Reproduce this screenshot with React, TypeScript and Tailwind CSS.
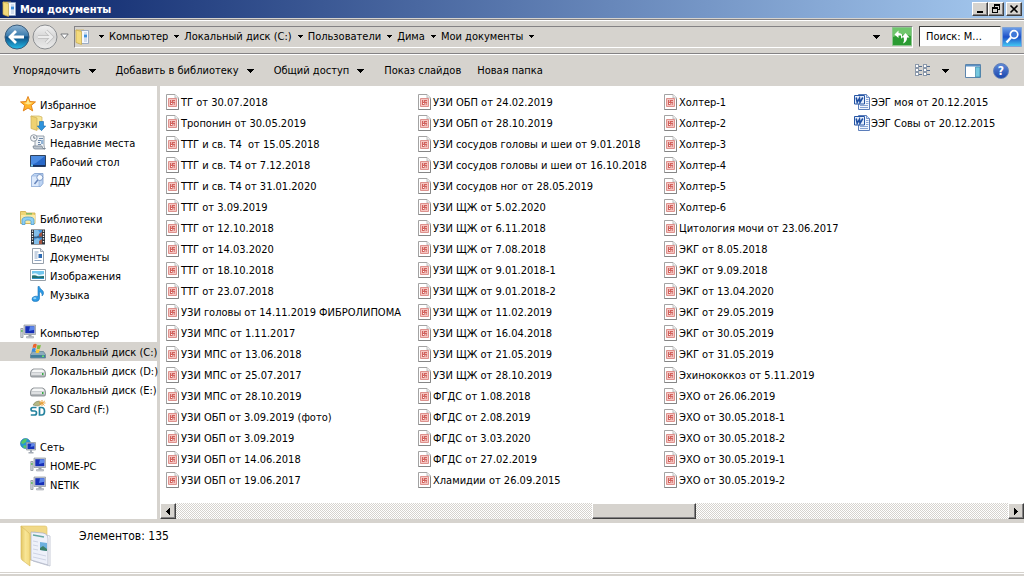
import type { ReactNode } from "react";

interface ITreeItem {
  label: string;
  icon: ReactNode;
  active?: boolean;
}

interface ITreeGroup extends ITreeItem {
  items: ITreeItem[];
}

function Arrow() {
  return (
    <svg viewBox="0 0 7 4" className="h-1 w-[7px] shrink-0" shapeRendering="crispEdges">
      <path d="M0 0h7L3.5 4z" fill="#000" />
    </svg>
  );
}

function CrumbArrow() {
  return (
    <svg viewBox="0 0 5 3" className="h-[3px] w-[5px] shrink-0" shapeRendering="crispEdges">
      <path d="M0 0h5L2.5 3z" fill="#000" />
    </svg>
  );
}

function FolderIcon({ className }: { className: string }) {
  return (
    <svg viewBox="0 0 32 42" className={className}>
      <defs>
        <linearGradient id="folder" x1="0" y1="0" x2="1" y2="0">
          <stop offset="0" stopColor="#e3c765" />
          <stop offset="0.5" stopColor="#f8e596" />
          <stop offset="1" stopColor="#f3d97c" />
        </linearGradient>
      </defs>
      <path d="M1 1h24q2 0 2 2v32H8z" fill="#f1d987" stroke="#dcc069" strokeWidth="0.6" />
      <path d="M14 7l16 4v30l-17-5z" fill="#fdfdff" stroke="#b9bfce" strokeWidth="0.8" />
      <path d="M11 7l12 1q5 1 5 6v26l-17-5z" fill="#eef1fa" stroke="#a9afc0" strokeWidth="0.7" />
      <path d="M13 10l11 2" stroke="#64a7a1" strokeWidth="1.6" />
      <path d="M20 17l7 1v8l-7-1z" fill="#6db0de" />
      <path d="M20 23l3-2 4 3v2l-7-1z" fill="#3c7f67" />
      <path d="M13 16l5 1M13 20l5 1M13 24l5 1M13 28l13 3M13 32l13 3" stroke="#c5cbdd" strokeWidth="0.8" />
      <path d="M1 1l8 7q1 1 1 3v30L2 35q-1-1-1-3z" fill="url(#folder)" stroke="#d3b75b" strokeWidth="0.6" />
    </svg>
  );
}

function SmallFolderIcon() {
  return (
    <svg viewBox="0 0 16 16" className="size-4 shrink-0">
      <path d="M1 1h8v13H3z" fill="#f5e08d" stroke="#c9ab4b" strokeWidth="0.7" />
      <path d="M6 1.5h7.5v13H6z" fill="#f4f8ff" stroke="#8b9fbd" strokeWidth="0.8" />
      <path d="M9 4h3M9 10h3M9 12h3" stroke="#9fb3d0" strokeWidth="0.8" />
      <path d="M9 5.5h3v3H9z" fill="#3f8fdb" />
      <path d="M1 1l5.5 1.5v13L1 13.5z" fill="#f3da7c" stroke="#c9ab4b" strokeWidth="0.7" />
    </svg>
  );
}

function StarIcon() {
  return (
    <svg viewBox="0 0 16 16" className="size-4 shrink-0">
      <path d="M8 .5l2 5 5.500.4-4.200 3.500 1.400 5.500L8 12 3.300 14.900l1.400-5.500L.5 5.900 6 5.500z" fill="#ffb52a" stroke="#e07c14" strokeWidth="0.9" />
      <path d="M8 2.500l1.300 4 3.700.3-3.500 1.500L8 8.500 4 7l2.700-.5z" fill="#ffe991" />
    </svg>
  );
}

function DownloadsIcon() {
  return (
    <svg viewBox="0 0 16 16" className="size-4 shrink-0">
      <path d="M1 1h8l3 1v12H4z" fill="#f7e697" stroke="#cdb05a" strokeWidth="0.7" />
      <path d="M1 1l6 2v12.500l-6-2z" fill="#efd271" stroke="#cdb05a" strokeWidth="0.7" />
      <path d="M9.500 6.500h4v4.500h2.200l-4.200 4.700-4.200-4.700h2.200z" fill="#2d93dc" stroke="#1668ac" strokeWidth="0.6" />
    </svg>
  );
}

function RecentIcon() {
  return (
    <svg viewBox="0 0 16 16" className="size-4 shrink-0">
      <path d="M5 2h9v9q0 3 1.500 3.500H5z" fill="#eef2f6" stroke="#7d8a98" strokeWidth="0.8" />
      <path d="M3 12h9q0 3 3 3H5q-2 0-2-3z" fill="#bcc5ce" stroke="#707c8a" strokeWidth="0.7" />
      <path d="M9 4.500h4M8 6.500h3M8 8.500h2M8 10.500h3" stroke="#6c87a8" />
      <path d="M11 6h2.500v4H11z" fill="#93b4d6" />
      <circle cx="3.800" cy="4" r="3.300" fill="#f6f8fa" stroke="#87919c" strokeWidth="0.9" />
      <path d="M3.800 2v2.200h1.700" stroke="#4b5968" strokeWidth="0.8" fill="none" />
    </svg>
  );
}

function DesktopIcon() {
  return (
    <svg viewBox="0 0 16 16" className="size-4 shrink-0">
      <path d="M.5 2.500h15v11H.5z" fill="#2868c8" stroke="#31435c" />
      <path d="M1 3h14L6 10 1 12z" fill="#5b9bec" opacity="0.7" />
      <path d="M1 12h14v1.500H1z" fill="#173364" />
      <path d="M1 11.500h2v2H1z" fill="#7ccff2" />
    </svg>
  );
}

function SearchFolderIcon() {
  return (
    <svg viewBox="0 0 16 16" className="size-4 shrink-0">
      <path d="M1.500 4l3-2.500H13v10L10.500 14.500h-9z" fill="#bcd4f4" stroke="#7c9ccc" strokeWidth="0.8" />
      <path d="M1.500 4H9v10.500H1.500z" fill="#dce9fb" stroke="#8eabd6" strokeWidth="0.6" />
      <circle cx="9.800" cy="5.500" r="3" fill="#f5faff" stroke="#7c98c6" />
      <path d="M7.800 8l-3.300 4" stroke="#6685bc" strokeWidth="1.5" />
    </svg>
  );
}

function LibrariesIcon() {
  return (
    <svg viewBox="0 0 16 16" className="size-4 shrink-0">
      <path d="M.5 1.500h5l1 1.500H15v10.500H.5z" fill="#f0d675" stroke="#cdaa45" strokeWidth="0.8" />
      <path d="M1 5h14v8H1z" fill="#fae9a4" />
      <path d="M6 3.200h6v1.300H6z" fill="#70b465" />
      <path d="M2 14.500V10q0-3 6-3t6 3v4.500h-3v-3.500q0-1-3-1t-3 1v3.500z" fill="#8dcff3" stroke="#4d9dd0" strokeWidth="0.8" />
    </svg>
  );
}

function VideoIcon() {
  return (
    <svg viewBox="0 0 16 16" className="size-4 shrink-0">
      <path d="M1 .5h14v15H1z" fill="#2b323b" />
      <path d="M4 1h8v6.500H4zM4 8.500h8V15H4z" fill="#4292da" />
      <path d="M4 1h4l2 3-3 3.500H4zM4 11l4-2 3 3-2 3H4z" fill="#82bee9" />
      <path d="M9 5l3-2v4.500H9zM9 12l3-2v5H9z" fill="#a4543f" />
      <path d="M2.500 1.500v13M13.500 1.500v13" stroke="#fff" strokeWidth="1.3" strokeDasharray="1.3 1.3" />
    </svg>
  );
}

function DocumentIcon() {
  return (
    <svg viewBox="0 0 16 16" className="size-4 shrink-0">
      <path d="M2.500.5h8l3 3v12h-11z" fill="#fff" stroke="#8b96a3" strokeWidth="0.9" />
      <path d="M10.500.5v3h3" fill="#dde4ec" stroke="#8b96a3" strokeWidth="0.8" />
      <path d="M4.500 4h4M4.500 6h3M4.500 8h3M4.500 10h3M4.500 12.500h7" stroke="#7f9abb" strokeWidth="0.9" />
      <path d="M8.500 6h3.500v4H8.500z" fill="#2f6cb4" />
    </svg>
  );
}

function PictureIcon() {
  return (
    <svg viewBox="0 0 16 16" className="size-4 shrink-0">
      <path d="M.5 2.500h15v11H.5z" fill="#fff" stroke="#8c959e" strokeWidth="0.9" />
      <path d="M2 4h12v8H2z" fill="#72c6ee" />
      <path d="M2 7q4-2 7 1l5-1v2H2z" fill="#e7f6fc" />
      <path d="M2 8.500q3-1 6 1l6-.5v3H2z" fill="#22706f" />
      <path d="M2 11h12v1H2z" fill="#2f91c5" />
    </svg>
  );
}

function MusicIcon() {
  return (
    <svg viewBox="0 0 16 16" className="size-4 shrink-0">
      <path d="M8 .5h1.300c.4 3 4.700 3.500 4.200 7-.3 1.500-1 2-1.500 2.500.5-3-1-3.500-2.500-4.300v7q-.5 2.800-4 2.800T2 13.200t3-2.900q1.500-.3 3 .2z" fill="#2d9be6" stroke="#1771b6" strokeWidth="0.6" />
      <ellipse cx="4.800" cy="12.200" rx="1.600" ry="1" fill="#92d3f8" />
    </svg>
  );
}

function ComputerIcon() {
  return (
    <svg viewBox="0 0 16 16" className="size-4 shrink-0">
      <path d="M.8 4.500h2.200v9H.8z" fill="#d5d9de" stroke="#808891" strokeWidth="0.7" />
      <path d="M1.300 6h1.200v2H1.300z" fill="#4cb84b" />
      <path d="M4 1h11.500v9.500H4z" fill="#c8ccd3" stroke="#8d939b" strokeWidth="0.7" />
      <path d="M5.300 2.200h9v7h-9z" fill="#1730b8" />
      <path d="M10 2.200h4.300v3.500L9 7z" fill="#5c86ea" />
      <path d="M8.500 10.500h3v2h-3z" fill="#9ba2ac" />
      <path d="M6.500 12.500h7V14h-7z" fill="#cbd0d7" stroke="#8d939b" strokeWidth="0.5" />
    </svg>
  );
}

function SystemDriveIcon() {
  return (
    <svg viewBox="0 0 16 16" className="size-4 shrink-0">
      <path d="M2.500 8.500h11l2 3v3.500H.5v-3.500z" fill="#8babbd" stroke="#5e7c8f" strokeWidth="0.7" />
      <path d="M.8 12h14.400v2.700H.8z" fill="#427d99" />
      <path d="M12 12.500h2v1.500h-2z" fill="#66df6b" />
      <path d="M3.300 1.500q2-1.500 3.500 0L6 5q-1.500-1-3.500 0z" fill="#ec632c" />
      <path d="M7.500 1.800q2 1 3.500 0L10 5.500q-1.500 1-3.300 0z" fill="#7dbd3e" />
      <path d="M2.300 5.500q2-1 3.500 0L5 9q-1.500-1-3.500 0z" fill="#3d8cdc" />
      <path d="M6.500 6q2 1 3.500 0L9 9.500q-1.500 1-3.300 0z" fill="#fbc52f" />
    </svg>
  );
}

function DriveIcon() {
  return (
    <svg viewBox="0 0 16 16" className="size-4 shrink-0">
      <path d="M.5 10.500q.5-3 3-3.500h9q2.500.5 3 3.500v3q0 1.500-1.500 1.500H2q-1.500 0-1.500-1.500z" fill="#b4b8bb" stroke="#7c8185" strokeWidth="0.8" />
      <path d="M1.500 10q1-2.300 2.500-2.500h8q1.500.2 2.500 2.500z" fill="#f6f7f7" />
      <path d="M1.300 10.500h13.400v2.500H1.300z" fill="#dee0e2" />
      <path d="M12 11h1.500v2H12z" fill="#35aa43" />
    </svg>
  );
}

function SdIcon() {
  return (
    <svg viewBox="0 0 16 16" className="size-4 shrink-0">
      <path d="M3 5q2-4 6-4l2 3-3 2z" fill="#b5b886" stroke="#7d835c" strokeWidth="0.6" />
      <path d="M12 0v6M9.500 1l5 4.500M14.800 1L9.500 5.500M9 3h6.500" stroke="#e89a2d" strokeWidth="0.9" />
      <path d="M6.500 7.500H3q-2 0-2 1.700T3 11h1.500q2 0 2 2T4.500 15H.8" stroke="#25839f" strokeWidth="1.7" fill="none" />
      <path d="M9.500 7.500V15h2q3 0 3-3.700t-3-3.800z" stroke="#25839f" strokeWidth="1.7" fill="none" />
    </svg>
  );
}

function NetworkIcon() {
  return (
    <svg viewBox="0 0 16 16" className="size-4 shrink-0">
      <circle cx="5.500" cy="5.500" r="5" fill="#2796d4" stroke="#1c6da6" strokeWidth="0.6" />
      <path d="M2 3q3-3 5-2L6 4 3 6 1 5zM4 7l3 1-2 2.500L3 9z" fill="#55c764" />
      <path d="M6.500 4.500h9v7.500h-9z" fill="#c5cad2" stroke="#858c96" strokeWidth="0.7" />
      <path d="M7.500 5.500h7v5.500h-7z" fill="#1733ba" />
      <path d="M11.500 5.500h3V8l-4 1z" fill="#5f88e9" />
      <path d="M10 12h2v2h-2zM8.500 14h5v1.500h-5z" fill="#a3aab4" />
    </svg>
  );
}

function ImageFileIcon() {
  return (
    <svg viewBox="0 0 14 16" className="h-4 w-3.5 shrink-0">
      <path d="M.5.500h8.500l3.500 3.500v11.500H.5z" fill="#fff" stroke="#a3a3a3" />
      <path d="M9 .5v3.500h3.500" fill="#eee" stroke="#b4b4b4" strokeWidth="0.8" />
      <path d="M.5 15.500h12V5" fill="none" stroke="#868686" />
      <path d="M2.500 4.500h8v8h-8z" fill="#f6c6c2" stroke="#dd918d" />
      <path d="M4 6h5v5H4z" fill="#d2625d" />
      <path d="M5 6.500h1v1H5zM7.500 7h1v1h-1zM5 9h1v1H5zM6.500 9.500h2v1h-2z" fill="#fff" />
    </svg>
  );
}

function WordIcon() {
  return (
    <svg viewBox="0 0 16 16" className="size-4 shrink-0">
      <path d="M4.500.5h8l3 3v12h-11z" fill="#f2f6fd" stroke="#5b7dba" />
      <path d="M12.500.5v3h3" fill="#cbdaf2" stroke="#5b7dba" strokeWidth="0.8" />
      <path d="M12 5.500h2.500M12 7.500h2.500M12 9.500h2.500M6 11.500h8M6 13.500h8" stroke="#88a3d2" />
      <path d="M.5 1.500h10v8.500H.5z" fill="#e6eefb" stroke="#2555a4" />
      <path d="M2.200 3.500l1 4.800 2.300-4 .5 4 2.800-4.800" fill="none" stroke="#1f4fa2" strokeWidth="1.6" />
    </svg>
  );
}

const tree: ITreeGroup[] = [
  {
    label: "Избранное",
    icon: <StarIcon />,
    items: [
      { label: "Загрузки", icon: <DownloadsIcon /> },
      { label: "Недавние места", icon: <RecentIcon /> },
      { label: "Рабочий стол", icon: <DesktopIcon /> },
      { label: "ДДУ", icon: <SearchFolderIcon /> },
    ],
  },
  {
    label: "Библиотеки",
    icon: <LibrariesIcon />,
    items: [
      { label: "Видео", icon: <VideoIcon /> },
      { label: "Документы", icon: <DocumentIcon /> },
      { label: "Изображения", icon: <PictureIcon /> },
      { label: "Музыка", icon: <MusicIcon /> },
    ],
  },
  {
    label: "Компьютер",
    icon: <ComputerIcon />,
    items: [
      { label: "Локальный диск (C:)", icon: <SystemDriveIcon />, active: true },
      { label: "Локальный диск (D:)", icon: <DriveIcon /> },
      { label: "Локальный диск (E:)", icon: <DriveIcon /> },
      { label: "SD Card (F:)", icon: <SdIcon /> },
    ],
  },
  {
    label: "Сеть",
    icon: <NetworkIcon />,
    items: [
      { label: "HOME-PC", icon: <ComputerIcon /> },
      { label: "NETIK", icon: <ComputerIcon /> },
    ],
  },
];

const columns = [
  {
    width: "w-[252px]",
    files: [
      "ТГ от 30.07.2018",
      "Тропонин от 30.05.2019",
      "ТТГ и св. Т4  от 15.05.2018",
      "ТТГ и св. Т4 от 7.12.2018",
      "ТТГ и св. Т4 от 31.01.2020",
      "ТТГ от 3.09.2019",
      "ТТГ от 12.10.2018",
      "ТТГ от 14.03.2020",
      "ТТГ от 18.10.2018",
      "ТТГ от 23.07.2018",
      "УЗИ головы от 14.11.2019 ФИБРОЛИПОМА",
      "УЗИ МПС от 1.11.2017",
      "УЗИ МПС от 13.06.2018",
      "УЗИ МПС от 25.07.2017",
      "УЗИ МПС от 28.10.2019",
      "УЗИ ОБП от 3.09.2019 (фото)",
      "УЗИ ОБП от 3.09.2019",
      "УЗИ ОБП от 14.06.2018",
      "УЗИ ОБП от 19.06.2017",
    ],
  },
  {
    width: "w-[246px]",
    files: [
      "УЗИ ОБП от 24.02.2019",
      "УЗИ ОБП от 28.10.2019",
      "УЗИ сосудов головы и шеи от 9.01.2018",
      "УЗИ сосудов головы и шеи от 16.10.2018",
      "УЗИ сосудов ног от 28.05.2019",
      "УЗИ ЩЖ от 5.02.2020",
      "УЗИ ЩЖ от 6.11.2018",
      "УЗИ ЩЖ от 7.08.2018",
      "УЗИ ЩЖ от 9.01.2018-1",
      "УЗИ ЩЖ от 9.01.2018-2",
      "УЗИ ЩЖ от 11.02.2019",
      "УЗИ ЩЖ от 16.04.2018",
      "УЗИ ЩЖ от 21.05.2019",
      "УЗИ ЩЖ от 28.10.2019",
      "ФГДС от 1.08.2018",
      "ФГДС от 2.08.2019",
      "ФГДС от 3.03.2020",
      "ФГДС от 27.02.2019",
      "Хламидии от 26.09.2015",
    ],
  },
  {
    width: "w-[190px]",
    files: [
      "Холтер-1",
      "Холтер-2",
      "Холтер-3",
      "Холтер-4",
      "Холтер-5",
      "Холтер-6",
      "Цитология мочи от 23.06.2017",
      "ЭКГ от 8.05.2018",
      "ЭКГ от 9.09.2018",
      "ЭКГ от 13.04.2020",
      "ЭКГ от 29.05.2019",
      "ЭКГ от 30.05.2019",
      "ЭКГ от 31.05.2019",
      "Эхинококкоз от 5.11.2019",
      "ЭХО от 26.06.2019",
      "ЭХО от 30.05.2018-1",
      "ЭХО от 30.05.2018-2",
      "ЭХО от 30.05.2019-1",
      "ЭХО от 30.05.2019-2",
    ],
  },
  { width: "grow", word: true, files: ["ЭЭГ моя от 20.12.2015", "ЭЭГ Совы от 20.12.2015"] },
];

const crumbs = ["Компьютер", "Локальный диск (C:)", "Пользователи", "Дима", "Мои документы"];

const raised = "border border-t-white border-l-white border-r-[#404040] border-b-[#404040] bg-[#d6d3ce] shadow-[inset_-1px_-1px_0_#848284]";

function TitleBar() {
  return (
    <header className="flex h-[18px] items-center bg-linear-to-r/srgb from-[#0a246a] to-[#a6caf0] px-0.5">
      <SmallFolderIcon />
      <h1 className="ml-0.5 grow text-[11px] font-bold text-white">Мои документы</h1>
      <button aria-label="Свернуть" className={`flex h-3.5 w-4 items-center justify-center ${raised}`}>
        <svg viewBox="0 0 12 10" className="h-2.5 w-3" shapeRendering="crispEdges">
          <path d="M3 7h6v2H3z" />
        </svg>
      </button>
      <button aria-label="Восстановить" className={`flex h-3.5 w-4 items-center justify-center ${raised}`}>
        <svg viewBox="0 0 12 10" className="h-2.5 w-3" shapeRendering="crispEdges">
          <path d="M4 0h6v6H8V5h1V2H5v1H4zM2 3h6v6H2zM3 5v3h4V5z" fillRule="evenodd" />
        </svg>
      </button>
      <button aria-label="Закрыть" className={`ml-0.5 flex h-3.5 w-4 items-center justify-center ${raised}`}>
        <svg viewBox="0 0 12 10" className="h-2.5 w-3">
          <path d="M2.500 1.500l7 7M9.500 1.500l-7 7" stroke="#000" strokeWidth="1.6" />
        </svg>
      </button>
    </header>
  );
}

function NavButtons() {
  return (
    <div className="flex w-[74px] shrink-0 items-center">
      <button aria-label="Назад">
        <svg viewBox="0 0 26 26" className="size-[26px]">
          <defs>
            <linearGradient id="back" x1="0" y1="0" x2="0" y2="1">
              <stop offset="0" stopColor="#8fb4d3" />
              <stop offset="0.45" stopColor="#3b7cae" />
              <stop offset="0.5" stopColor="#0d4d83" />
              <stop offset="1" stopColor="#25bdea" />
            </linearGradient>
          </defs>
          <circle cx="13" cy="13" r="12" fill="url(#back)" stroke="#3a5c7b" />
          <path d="M12 7l-6 6 6 6M7 13h13" fill="none" stroke="#fff" strokeWidth="2.8" />
        </svg>
      </button>
      <button aria-label="Вперёд" className="ml-0.5">
        <svg viewBox="0 0 26 26" className="size-[26px]">
          <defs>
            <linearGradient id="forward" x1="0" y1="0" x2="0" y2="1">
              <stop offset="0" stopColor="#f2f2f2" />
              <stop offset="0.5" stopColor="#d6d6d6" />
              <stop offset="1" stopColor="#ececec" />
            </linearGradient>
          </defs>
          <circle cx="13" cy="13" r="12" fill="url(#forward)" stroke="#8c8e91" />
          <path d="M14 7l6 6-6 6M19 13H6" fill="none" stroke="#bdbdbd" strokeWidth="3.6" />
          <path d="M14 7l6 6-6 6M19 13H6" fill="none" stroke="#ececec" strokeWidth="2.2" />
        </svg>
      </button>
      <button aria-label="Последние страницы" className="ml-0.5">
        <svg viewBox="0 0 9 7" className="h-[7px] w-[9px]">
          <path d="M.8 1h7.400L4.500 5.500z" fill="#fff" stroke="#77797c" />
        </svg>
      </button>
    </div>
  );
}

function AddressBar() {
  return (
    <div className="mt-px flex h-[35px] items-center border-y border-t-[#848284] border-b-[#848284] pr-0.5 pl-1 shadow-[inset_0_1px_0_#fff,0_1px_0_#fff]">
      <NavButtons />
      <nav className="mr-1.5 -ml-1 flex h-[22px] grow items-center border border-t-[#848284] border-r-white border-b-white border-l-[#848284]">
        <SmallFolderIcon />
        <div className="ml-2 flex grow items-center gap-[5px]">
          <CrumbArrow />
          {crumbs.map((crumb) => (
            <a key={crumb} href="#" className="flex items-center gap-1.5 whitespace-nowrap">
              {crumb}
              <CrumbArrow />
            </a>
          ))}
        </div>
        <button aria-label="Предыдущие расположения" className="mr-3">
          <Arrow />
        </button>
        <button aria-label="Обновить">
          <svg viewBox="0 0 20 19" className="h-[19px] w-5">
            <path d="M.5.500h19v18H.5z" fill="#2b9b32" stroke="#8cc58d" />
            <path d="M1 1h18v8q-9-3-18 1z" fill="#6fc66c" />
            <path d="M6.500 3.500L2.500 7.500l4 3.500V8.500H9V12q2-2 1-4.500Q9 6 6.500 6z" fill="#fff" />
            <path d="M13.500 6l4 4.500H15q.3 4-4 6 1.500-2.500.8-6H9.500z" fill="#fff" />
          </svg>
        </button>
      </nav>
      <input
        aria-label="Поиск"
        defaultValue="Поиск: М..."
        className="h-[21px] w-[82px] border border-t-[#404040] border-r-[#d6d3ce] border-b-[#d6d3ce] border-l-[#404040] bg-white px-1.5 text-[11px] outline-none"
      />
      <button aria-label="Найти" className="ml-px">
        <svg viewBox="0 0 20 20" className="size-5">
          <defs>
            <linearGradient id="find" x1="0" y1="0" x2="0" y2="1">
              <stop offset="0" stopColor="#6ea0e8" />
              <stop offset="0.5" stopColor="#1e50c8" />
              <stop offset="1" stopColor="#45cdf5" />
            </linearGradient>
          </defs>
          <path d="M.5.500h19v19H.5z" fill="url(#find)" stroke="#80a4d8" />
          <circle cx="12" cy="7.500" r="3.800" fill="#3f78d8" stroke="#fff" strokeWidth="1.7" />
          <path d="M9 10.500l-4.500 5" stroke="#fff" strokeWidth="2.4" />
        </svg>
      </button>
    </div>
  );
}

function CommandBar() {
  return (
    <div className="mt-px flex h-[31px] items-center pr-[15px] pl-[13px] whitespace-nowrap">
      <div className="flex gap-5">
        <button className="flex items-center gap-2">
          Упорядочить <Arrow />
        </button>
        <button className="flex items-center gap-2">
          Добавить в библиотеку <Arrow />
        </button>
        <button className="flex items-center gap-2">
          Общий доступ <Arrow />
        </button>
        <button>Показ слайдов</button>
        <button className="-ml-1">Новая папка</button>
      </div>
      <div className="ml-auto flex items-center">
        <button aria-label="Вид" className="flex items-center gap-3">
          <svg viewBox="0 0 16 13" className="h-[13px] w-4" shapeRendering="crispEdges">
            {[0, 4, 8].map((y) => (
              <g key={y}>
                <path d={`M1.5 ${y + 0.5}h3v3h-3zM9.5 ${y + 0.5}h3v3h-3z`} fill="#fff" stroke="#8c99ab" />
                <path d={`M5 ${y + 2.5}h3M13 ${y + 2.5}h3`} stroke="#546d91" />
              </g>
            ))}
          </svg>
          <Arrow />
        </button>
        <button aria-label="Область просмотра" className="ml-4">
          <svg viewBox="0 0 16 14" className="h-3.5 w-4">
            <path d="M.5.500h15v13H.5z" fill="#fff" stroke="#5c84ac" />
            <path d="M1 1h14v1.500H1z" fill="#5c91c5" />
            <path d="M10.500 3h4.500v10h-4.500z" fill="#75c8df" stroke="#3d87a9" strokeWidth="0.7" />
          </svg>
        </button>
        <button aria-label="Справка" className="ml-3 size-4 rounded-full border border-[#5f7fb8] bg-linear-to-b from-[#5f88d6] to-[#1c46ae] text-[12px] leading-[14px] font-bold text-white">
          ?
        </button>
      </div>
    </div>
  );
}

function Sidebar() {
  return (
    <aside className="flex w-[160px] shrink-0 flex-col gap-[19px] border-r-3 border-[#d6d3ce] pt-[9px]">
      {tree.map((group) => (
        <ul key={group.label}>
          <li>
            <a href="#" className="flex h-[19px] items-start gap-1 pt-px pl-5 whitespace-nowrap">
              {group.icon}
              {group.label}
            </a>
          </li>
          {group.items.map((item) => (
            <li key={item.label} className={item.active ? "bg-[#d6d3ce]" : ""}>
              <a href="#" className="flex h-[19px] items-start gap-1 pt-px pl-[30px] whitespace-nowrap">
                {item.icon}
                {item.label}
              </a>
            </li>
          ))}
        </ul>
      ))}
    </aside>
  );
}

function ScrollBar() {
  return (
    <div className="flex h-4 bg-[repeating-conic-gradient(#d6d3ce_0_25%,#fff_0_50%)] bg-size-[2px_2px]">
      <button aria-label="Прокрутить влево" className={`flex w-4 items-center justify-center ${raised}`}>
        <svg viewBox="0 0 4 7" className="h-[7px] w-1" shapeRendering="crispEdges">
          <path d="M4 0v7L0 3.500z" />
        </svg>
      </button>
      <div className="flex-[416]" />
      <div className={`flex-[102] ${raised}`} />
      <div className="flex-[312]" />
      <button aria-label="Прокрутить вправо" className={`flex w-4 items-center justify-center ${raised}`}>
        <svg viewBox="0 0 4 7" className="h-[7px] w-1" shapeRendering="crispEdges">
          <path d="M0 0v7l4-3.500z" />
        </svg>
      </button>
    </div>
  );
}

export default function App() {
  return (
    <div className="flex min-h-screen flex-col bg-[#d6d3ce] font-['DejaVu_Sans_Condensed','Noto_Sans',sans-serif] text-[11px] leading-[19px] text-black">
      <TitleBar />
      <AddressBar />
      <CommandBar />
      <div className="flex bg-white">
        <Sidebar />
        <main className="flex min-w-0 grow flex-col">
          <div className="flex grow overflow-hidden pt-1.5 pb-3 pl-1.5 leading-[17px]">
            {columns.map((column) => (
              <ul key={column.files[0]} className={`shrink-0 ${column.width}`}>
                {column.files.map((file) => (
                  <li key={file} className="flex h-[21px] items-start gap-px pt-0.5 whitespace-pre">
                    {column.word ? <WordIcon /> : <ImageFileIcon />}
                    {file}
                  </li>
                ))}
              </ul>
            ))}
          </div>
          <ScrollBar />
        </main>
      </div>
      <footer className="mt-1 flex grow bg-white pl-5">
        <FolderIcon className="mt-0.5 h-[42px] w-8" />
        <p className="mt-1 ml-[27px] text-[12px]">Элементов: 135</p>
      </footer>
      <div className="mt-px h-px bg-white" />
      <div className="h-0.5" />
    </div>
  );
}
